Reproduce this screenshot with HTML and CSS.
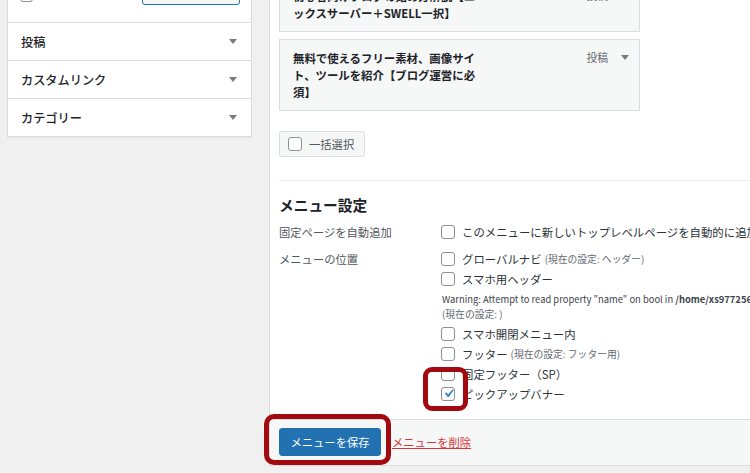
FILE: index.html
```html
<!DOCTYPE html>
<html lang="ja">
<head>
<meta charset="UTF-8" />
<meta name="viewport" content="width=device-width, initial-scale=1" />
<title>メニュー</title>
<link rel="stylesheet" href="styles.css">
</head>
<body>

<div class="page">
  <div class="side">
    <div class="box-controls">
      <span class="check small"></span>
      <span class="add-btn">メニューに追加</span>
    </div>
    <div class="acc-row">投稿<span class="arrow"></span></div>
    <div class="acc-row">カスタムリンク<span class="arrow"></span></div>
    <div class="acc-row">カテゴリー<span class="arrow"></span></div>
  </div>

  <div class="main">
    <div class="menu-body">
      <div class="item">
        <div class="item-title">初心者向けブログの始め方解説【エックスサーバー＋SWELL一択】</div>
        <div class="item-controls">投稿<span class="arrow"></span></div>
      </div>
      <div class="item">
        <div class="item-title">無料で使えるフリー素材、画像サイト、ツールを紹介【ブログ運営に必須】</div>
        <div class="item-controls">投稿<span class="arrow"></span></div>
      </div>

      <div class="bulk"><span class="check"></span>一括選択</div>

      <div class="settings">
        <h3>メニュー設定</h3>
        <div class="setting-row">
          <div class="label">固定ページを自動追加</div>
          <div class="opt"><span class="check"></span>このメニューに新しいトップレベルページを自動的に追加</div>
        </div>
        <div class="setting-row second">
          <div class="label">メニューの位置</div>
          <div>
            <div class="opt"><span class="check"></span>グローバルナビ<span class="note">(現在の設定: ヘッダー)</span></div>
            <div class="opt"><span class="check"></span>スマホ用ヘッダー</div>
            <div class="warning">
              Warning: Attempt to read property "name" on bool in <b>/home/xs977256/mtaka.com/public_html/wp-admin/nav-menus.php</b> on line <b>1047</b><br>
              <span class="note first">(現在の設定: )</span>
            </div>
            <div class="opt"><span class="check"></span>スマホ開閉メニュー内</div>
            <div class="opt"><span class="check"></span>フッター<span class="note">(現在の設定: フッター用)</span></div>
            <div class="opt"><span class="check"></span>固定フッター（SP）</div>
            <div class="opt"><span class="check"><svg viewBox="0 0 20 20"><path d="M14.83 4.89l1.34.94-5.81 8.38H9.02L5.78 9.67l1.34-1.25 2.57 2.4z"/></svg></span>ピックアップバナー</div>
          </div>
        </div>
      </div>
    </div>

    <div class="menu-footer">
      <span class="save-btn">メニューを保存</span>
      <a class="delete" href="#">メニューを削除</a>
    </div>
  </div>
</div>

<!-- annotation frames -->
<div class="mark mark-check"></div>
<div class="mark mark-save"></div>

</body>
</html>
```

FILE: styles.css
```css
* {
  box-sizing: border-box;
}
body {
  margin: 0;
  background-color: #f0f0f1;
  font-family: "Noto Sans CJK JP", "Noto Sans", sans-serif;
  color: #1d2327;
  height: 473px;
  overflow: hidden;
  position: relative;
}
.page {
  display: flex;
  align-items: flex-start;
  gap: 17px;
  padding-left: 7px;
}

/* left column */
.side {
  flex: 0 0 245px;
  margin-top: -30px;
  background: #fff;
  border: 1px solid #dcdcde;
  box-shadow: 0 1px 1px rgba(0, 0, 0, 0.04);
}
.box-controls {
  height: 52px;
  display: flex;
  justify-content: space-between;
  align-items: flex-end;
  padding: 0 11px 17px 12px;
  border-bottom: 1px solid #dcdcde;
}
.box-controls .check {
  margin-bottom: 3px;
}
.add-btn {
  width: 98px;
  height: 27px;
  border: 1px solid #2271b1;
  border-radius: 3px;
  background: #f6f7f7;
  color: #2271b1;
  font-size: 11.3px;
  line-height: 25px;
  text-align: center;
}
.acc-row {
  height: 38px;
  display: flex;
  justify-content: space-between;
  align-items: center;
  padding: 0 14px 0 13px;
  font-size: 12.2px;
  font-weight: 500;
  border-bottom: 1px solid #dcdcde;
}
.acc-row:last-child {
  height: 37px;
  border-bottom: 0;
}
.arrow {
  width: 0;
  height: 0;
  border-left: 4px solid transparent;
  border-right: 4px solid transparent;
  border-top: 5px solid #787c82;
}

/* checkboxes */
.check {
  flex: 0 0 auto;
  width: 14px;
  height: 14px;
  border: 1px solid #8c8f94;
  border-radius: 3px;
  background: #fff;
}
.check.small {
  width: 13px;
  height: 13px;
}
.check svg {
  display: block;
  width: 17px;
  height: 17px;
  margin: -3px 0 0 -2px;
  fill: #3582c4;
}

/* right column */
.main {
  flex: 0 0 600px;
  margin-top: -30px;
  background: #fff;
  border: 1px solid #dcdcde;
}
.menu-body {
  padding: 6px 0 15px 9px;
}
.item {
  width: 361px;
  display: flex;
  justify-content: space-between;
  align-items: flex-start;
  padding: 10px 10px 9px 13px;
  border: 1px solid #dcdcde;
  background: #f6f7f7;
}
.item + .item {
  margin-top: 7px;
}
.item-title {
  width: 185px;
  font-size: 11.4px;
  font-weight: 700;
  line-height: 17px;
}
.item-controls {
  display: flex;
  align-items: center;
  gap: 13px;
  font-size: 10.8px;
  line-height: 15px;
  color: #646970;
}
.bulk {
  width: max-content;
  height: 26px;
  margin-top: 20px;
  display: flex;
  align-items: center;
  gap: 7px;
  padding: 0 10px 0 8px;
  border: 1px solid #dcdcde;
  border-radius: 3px;
  background: #f6f7f7;
  font-size: 11.3px;
  color: #50575e;
}
.settings {
  margin-top: 23px;
  border-top: 1px solid #f0f0f1;
}
.settings h3 {
  margin: 14px 0 7px;
  font-size: 14.7px;
  line-height: 20px;
  font-weight: 700;
}
.setting-row {
  display: grid;
  grid-template-columns: 162px 1fr;
}
.setting-row.second {
  margin-top: 7px;
}
.label {
  font-size: 11.3px;
  line-height: 20px;
  color: #50575e;
}
.opt {
  height: 20px;
  display: flex;
  align-items: center;
  gap: 7px;
  font-size: 11.4px;
  color: #2c3338;
  white-space: nowrap;
}
.note {
  margin-left: -4px;
  font-size: 9.8px;
  color: #646970;
}
.note.first {
  margin-left: 0;
}
.warning {
  height: 35px;
  padding: 3px 0 2px 1px;
  font-size: 9.4px;
  line-height: 15px;
  color: #3c434a;
  white-space: nowrap;
}

/* footer */
.menu-footer {
  display: flex;
  align-items: center;
  gap: 11px;
  padding: 8px 9px 9px;
  border-top: 1px solid #dcdcde;
  background: #f6f7f7;
}
.save-btn {
  width: 102px;
  height: 28px;
  border: 1px solid #2271b1;
  border-radius: 3px;
  background: #2271b1;
  color: #fff;
  font-size: 11.3px;
  line-height: 26px;
  text-align: center;
}
.delete {
  font-size: 11.3px;
  color: #d63638;
  text-decoration: underline;
}

/* red annotation frames */
.mark {
  position: absolute;
  border: 5px solid #a30a10;
  border-radius: 9px;
}
.mark-check {
  left: 423px;
  top: 367px;
  width: 45px;
  height: 44px;
}
.mark-save {
  left: 264px;
  top: 414px;
  width: 127px;
  height: 51px;
  border-radius: 10px;
}
```
